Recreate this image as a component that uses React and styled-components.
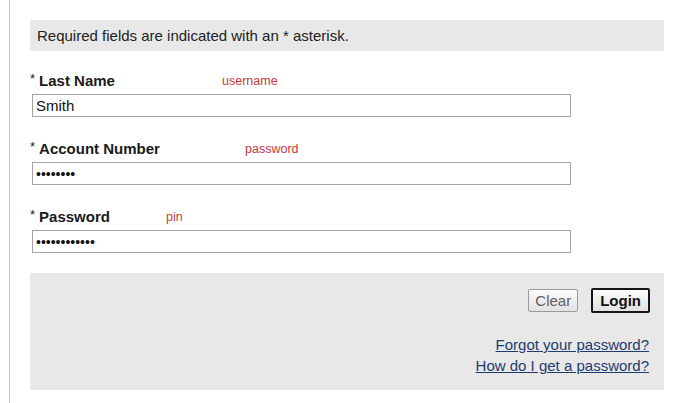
import React from 'react'
import styled, { createGlobalStyle } from 'styled-components'

const GlobalStyle = createGlobalStyle`
    html, body {
        margin: 0;
        padding: 0;
        background: #fff;
    }
    body {
        font-family: 'Liberation Sans', Helvetica, Arial, sans-serif;
        color: #111;
    }
`;

const Page = styled.div`
    width: 679px;
    height: 403px;
    box-sizing: border-box;
    padding-left: 9px;
`;

const Frame = styled.div`
    height: 100%;
    border-left: 1px solid #c8c8c8;
    padding: 20px 0 0 20px;
    box-sizing: border-box;
`;

const Form = styled.form`
    width: 634px;
    display: flex;
    flex-direction: column;
`;

const Notice = styled.div`
    height: 31px;
    background: #e8e8e8;
    padding-left: 7px;
    display: flex;
    align-items: center;
    font-size: 15px;
    color: #222;
`;

const Fields = styled.div`
    display: flex;
    flex-direction: column;
    gap: 22px;
    padding-top: 20px;
`;

const Field = styled.div`
    display: flex;
    flex-direction: column;
    gap: 5px;
`;

const LabelRow = styled.div`
    display: flex;
    align-items: center;
    height: 18px;
`;

const Label = styled.label`
    width: ${p => p.$hintAt}px;
    font-size: 15px;
    font-weight: bold;
    color: #1a1a1a;
    white-space: nowrap;
`;

const Star = styled.span`
    font-weight: normal;
    font-size: 13px;
    position: relative;
    top: -3px;
    margin-right: 4px;
`;

const Hint = styled.span`
    font-size: 12.5px;
    color: #c8383a;
    position: relative;
    top: 1px;
`;

const Input = styled.input`
    margin-left: 2px;
    width: 539px;
    height: 23px;
    box-sizing: border-box;
    border: 1px solid #a4a4a4;
    padding: 0 3px;
    font-family: 'Liberation Sans', Helvetica, Arial, sans-serif;
    font-size: ${p => (p.type === 'password' ? '14px' : '15px')};
    color: #111;
    background: #fff;
    outline: none;
`;

const Footer = styled.div`
    margin-top: 20px;
    height: 117px;
    background: #e8e8e8;
    box-sizing: border-box;
    padding: 16px 14px 0 0;
    display: flex;
    flex-direction: column;
    align-items: flex-end;
`;

const Buttons = styled.div`
    display: flex;
    gap: 13px;
`;

const Button = styled.button`
    height: ${p => (p.$primary ? '25px' : '23px')};
    margin-top: ${p => (p.$primary ? '-1px' : '0')};
    padding: 0 ${p => (p.$primary ? '7px' : '6px')};
    font-family: 'Liberation Sans', Helvetica, Arial, sans-serif;
    font-size: 15px;
    font-weight: ${p => (p.$primary ? 'bold' : 'normal')};
    color: ${p => (p.$primary ? '#111' : '#606060')};
    border: ${p => (p.$primary ? '2px solid #161616' : '1px solid #9a9a9a')};
    border-radius: 2px;
    background: linear-gradient(#fbfbfb, #e2e2e2);
    cursor: pointer;
`;

const Links = styled.div`
    margin-top: 21px;
    display: flex;
    flex-direction: column;
    align-items: flex-end;
    margin-right: 1px;
`;

const Link = styled.a`
    font-size: 15px;
    line-height: 21px;
    color: #1e3b6f;
    text-decoration: underline;
`;

const fields = [
    { label: 'Last Name', hint: 'username', hintAt: 192, type: 'text', value: 'Smith' },
    { label: 'Account Number', hint: 'password', hintAt: 215, type: 'password', value: '12345678' },
    { label: 'Password', hint: 'pin', hintAt: 136, type: 'password', value: 'abcdefghijkl' },
]

export default function App() {
    return (
        <Page>
            <GlobalStyle />
            <Frame>
                <Form onSubmit={e => e.preventDefault()}>
                    <Notice>Required fields are indicated with an * asterisk.</Notice>
                    <Fields>
                        {fields.map(f => (
                            <Field key={f.label}>
                                <LabelRow>
                                    <Label $hintAt={f.hintAt}><Star>*</Star>{f.label}</Label>
                                    <Hint>{f.hint}</Hint>
                                </LabelRow>
                                <Input type={f.type} defaultValue={f.value} />
                            </Field>
                        ))}
                    </Fields>
                    <Footer>
                        <Buttons>
                            <Button type="reset">Clear</Button>
                            <Button $primary type="submit">Login</Button>
                        </Buttons>
                        <Links>
                            <Link href="#">Forgot your password?</Link>
                            <Link href="#">How do I get a password?</Link>
                        </Links>
                    </Footer>
                </Form>
            </Frame>
        </Page>
    )
}
